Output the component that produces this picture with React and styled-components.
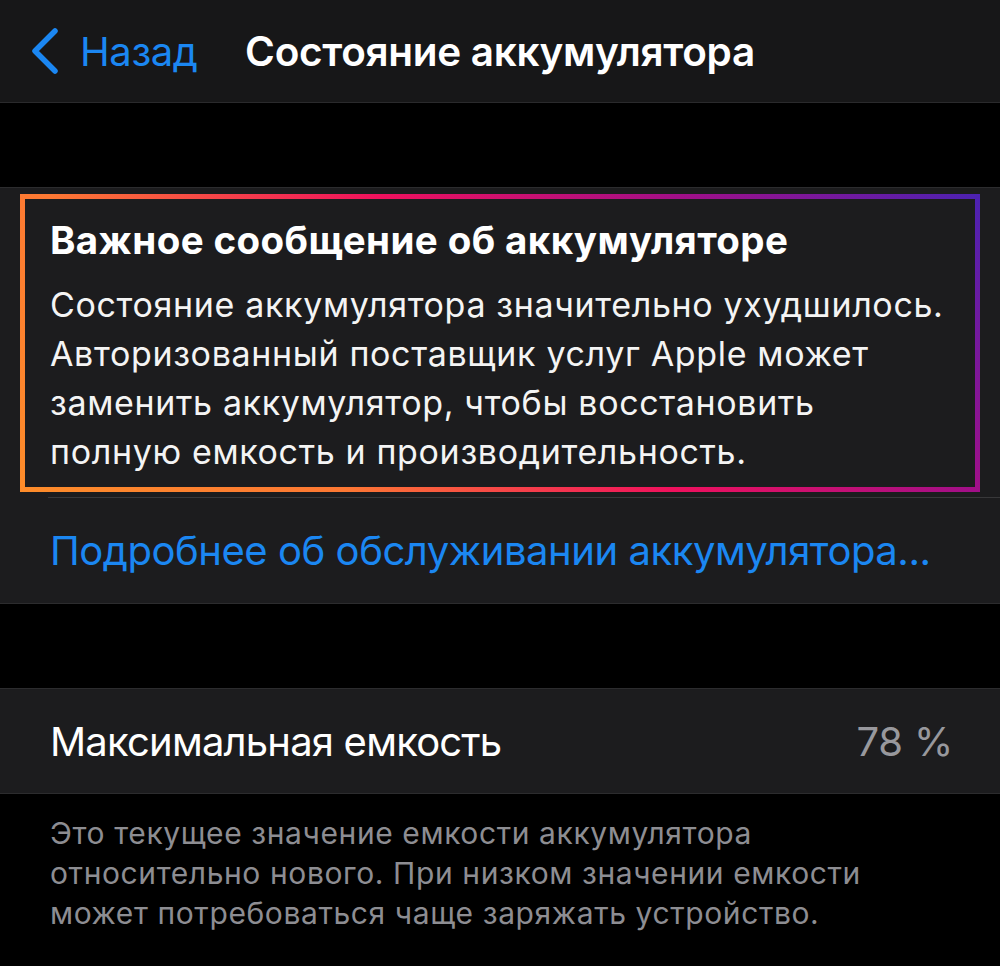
import React from "react";
import styled, { createGlobalStyle } from "styled-components";

const GlobalStyle = createGlobalStyle`
  html, body {
    margin: 0;
    padding: 0;
    background: #000;
  }
  body {
    font-family: Inter, "Noto Sans", "DejaVu Sans", sans-serif;
    -webkit-font-smoothing: antialiased;
  }
`;

const Page = styled.div`
  width: 1000px;
  min-height: 966px;
  background: #000;
  color: #fff;
`;

const NavBar = styled.header`
  height: 102px;
  background: #171718;
  border-bottom: 1px solid #2a2a2c;
  display: grid;
  grid-template-columns: 1fr auto 1fr;
  align-items: center;
`;

const BackButton = styled.a`
  display: flex;
  align-items: center;
  gap: 19px;
  padding-left: 31px;
  color: #1b87f2;
  font-size: 40px;
  letter-spacing: -0.4px;
  text-decoration: none;
`;

const NavTitle = styled.h1`
  margin: 0;
  font-size: 40.5px;
  font-weight: 600;
  letter-spacing: -0.3px;
  color: #fff;
`;

const Spacer = styled.div`
  height: 84px;
`;

const Group = styled.section`
  background: #1c1c1e;
  border-top: 1px solid #2c2c2e;
  border-bottom: 1px solid #2c2c2e;
`;

const AlertGroup = styled(Group)`
  padding-top: 6px;
`;

const GradientFrame = styled.div`
  margin: 0 20px;
  padding: 5px;
  background: linear-gradient(
    45deg,
    #fd8c2a 0%,
    #fd7833 26%,
    #f0115d 52%,
    #a10f88 76%,
    #4b22b2 100%
  );
`;

const AlertBody = styled.div`
  background: #1c1c1e;
  padding: 19px 20px 11px 25px;
`;

const AlertTitle = styled.h2`
  margin: 0 0 18px;
  font-size: 38.5px;
  line-height: 44px;
  font-weight: 700;
  letter-spacing: 0.4px;
`;

const AlertText = styled.p`
  margin: 0;
  font-size: 34px;
  line-height: 49px;
  letter-spacing: 0.65px;
  color: #f4f4f4;
`;

const LinkRow = styled.div`
  margin: 5px 0 0 48px;
  border-top: 1px solid #38383a;
  height: 105px;
  display: flex;
  align-items: center;
  padding-left: 2px;
`;

const BlueLink = styled.a`
  color: #1b87f2;
  font-size: 40px;
  letter-spacing: -0.45px;
  text-decoration: none;
`;

const ValueRow = styled.div`
  height: 104px;
  display: flex;
  align-items: center;
  justify-content: space-between;
  padding: 0 47px 0 50px;
`;

const Label = styled.span`
  font-size: 40px;
  letter-spacing: -0.8px;
  color: #fff;
`;

const Value = styled.span`
  font-size: 40px;
  letter-spacing: -0.2px;
  color: #98989d;
`;

const Footnote = styled.p`
  margin: 0;
  padding: 19px 50px 0;
  font-size: 30px;
  line-height: 40px;
  letter-spacing: 0.6px;
  color: #8d8d92;
`;

const Chevron = () => (
  <svg width="30" height="48" viewBox="0 0 30 48" fill="none">
    <polyline
      points="24,4 4,24 24,44"
      stroke="#1b87f2"
      strokeWidth="5.5"
      strokeLinecap="round"
      strokeLinejoin="round"
    />
  </svg>
);

export default function App() {
  return (
    <Page>
      <GlobalStyle />
      <NavBar>
        <BackButton href="#">
          <Chevron />
          Назад
        </BackButton>
        <NavTitle>Состояние аккумулятора</NavTitle>
        <div />
      </NavBar>
      <Spacer />
      <AlertGroup>
        <GradientFrame>
          <AlertBody>
            <AlertTitle>Важное сообщение об аккумуляторе</AlertTitle>
            <AlertText>
              Состояние аккумулятора значительно ухудшилось.
              <br />
              Авторизованный поставщик услуг Apple может
              <br />
              заменить аккумулятор, чтобы восстановить
              <br />
              полную емкость и производительность.
            </AlertText>
          </AlertBody>
        </GradientFrame>
        <LinkRow>
          <BlueLink href="#">Подробнее об обслуживании аккумулятора...</BlueLink>
        </LinkRow>
      </AlertGroup>
      <Spacer />
      <Group>
        <ValueRow>
          <Label>Максимальная емкость</Label>
          <Value>78 %</Value>
        </ValueRow>
      </Group>
      <Footnote>
        Это текущее значение емкости аккумулятора
        <br />
        относительно нового. При низком значении емкости
        <br />
        может потребоваться чаще заряжать устройство.
      </Footnote>
    </Page>
  );
}
